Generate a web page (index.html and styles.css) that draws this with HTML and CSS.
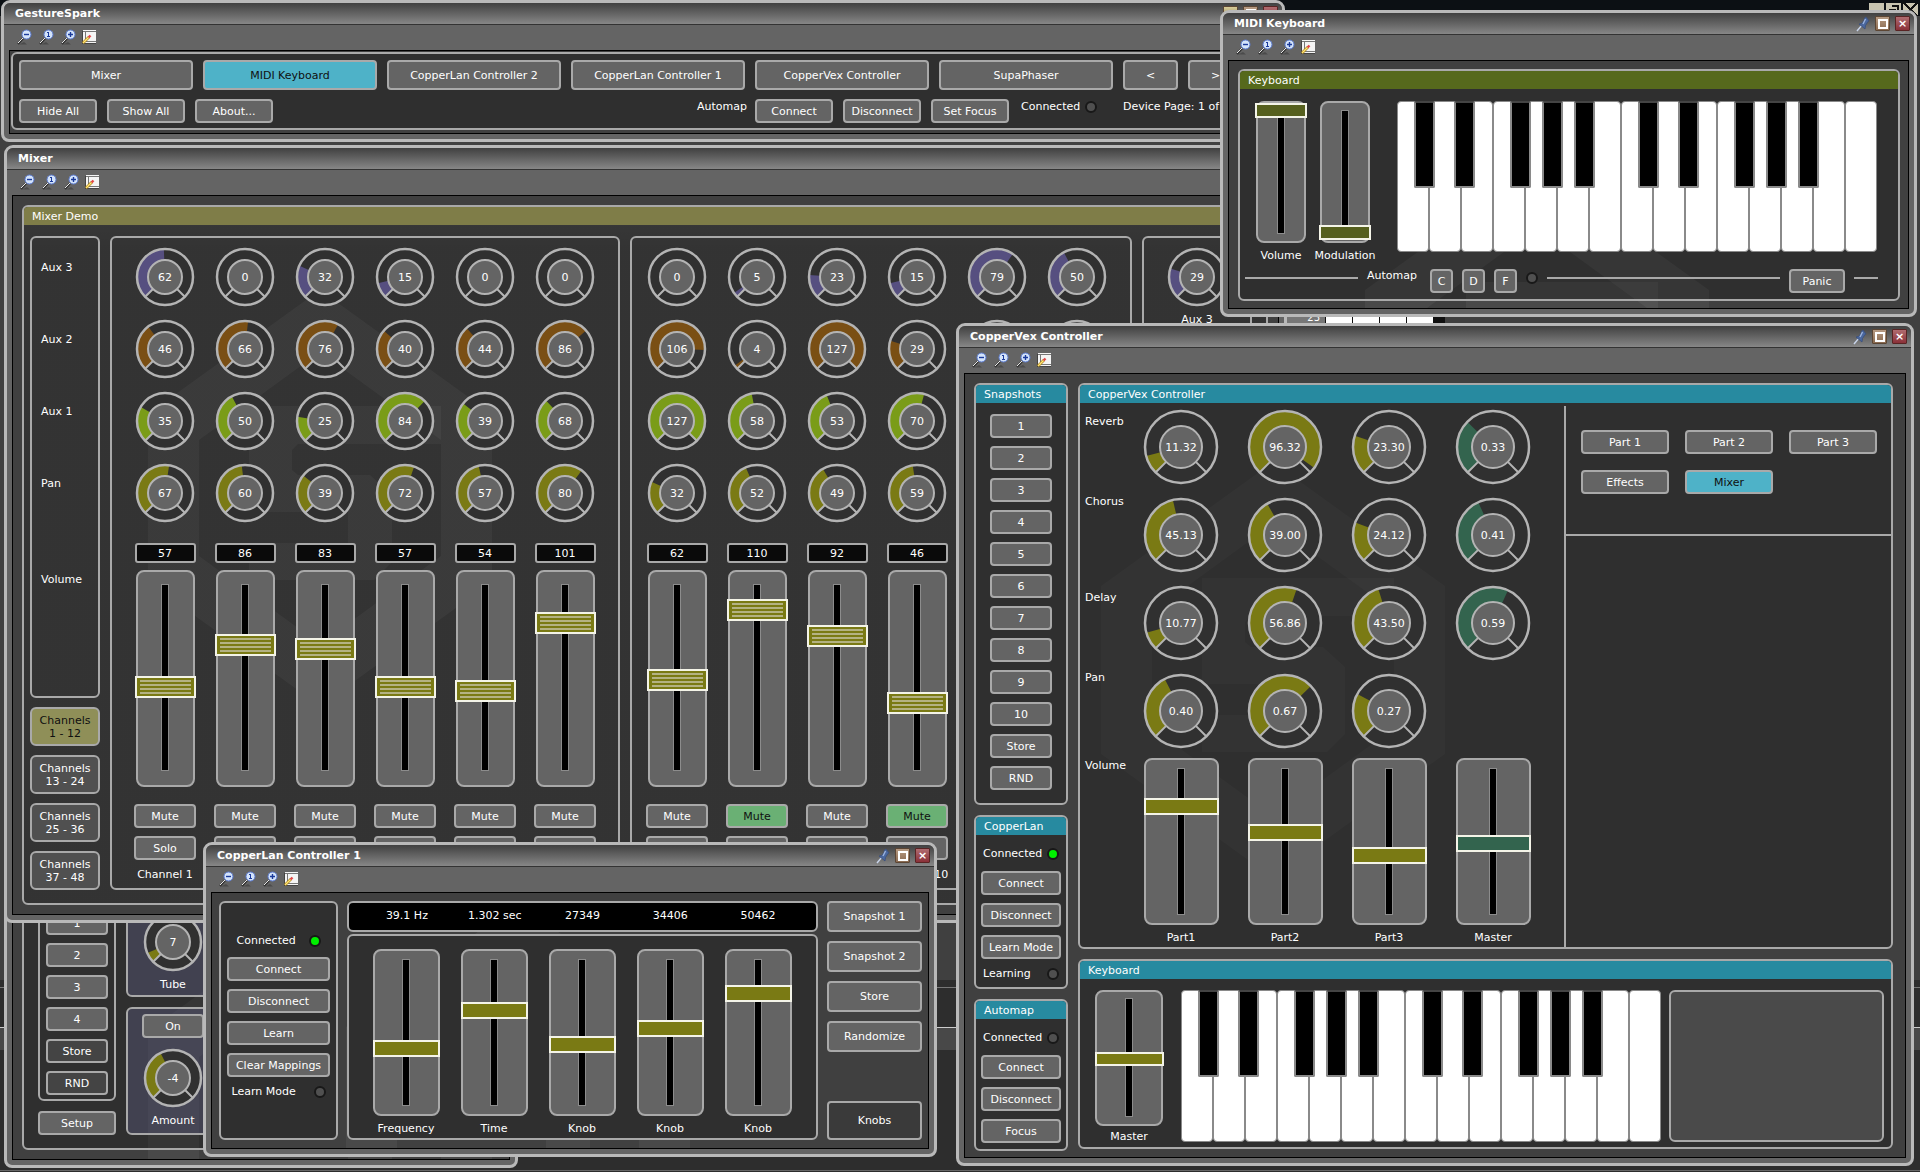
FILE: index.html
```html
<!DOCTYPE html>
<html lang="en">
<head>
<meta charset="utf-8">
<title>GestureSpark</title>
<link rel="stylesheet" href="styles.css">
</head>
<body>
<svg class="defs" aria-hidden="true">
  <symbol id="mark" viewBox="0 0 344 416">
    <path fill-rule="evenodd" d="M172 0L344 124V292L172 416L0 292V124ZM172 62L51 150V266L172 354L293 266V150Z"/>
    <path d="M101 116H293V154H150L144 160V180L150 185H222L244 205V272L226 290H101V253H200V222H101Z"/>
  </symbol>
  <symbol id="lens" viewBox="0 0 15 16">
    <path d="M2 15.500H10L7 13Z" fill="#000" opacity=".25"/>
    <path d="M1 15L6 9.500" stroke="#333" stroke-width="2"/>
    <path d="M1 14L6 9" stroke="#e8e8e8" stroke-width="1"/>
    <circle cx="9.500" cy="5.500" r="4.500" fill="#d3e3fa" stroke="#5b7bd0" stroke-width="1"/>
  </symbol>
  <symbol id="zoom-out" viewBox="0 0 15 16"><use href="#lens"/><path d="M7 5.500H12" stroke="#1a3a9c" stroke-width="1.400"/></symbol>
  <symbol id="zoom-one" viewBox="0 0 15 16"><use href="#lens"/><path d="M9.500 3V8M8 3.500H9.500M8 7.500H11" stroke="#1a3a9c" stroke-width="1" fill="none"/></symbol>
  <symbol id="zoom-in" viewBox="0 0 15 16"><use href="#lens"/><path d="M7 5.500H12M9.500 3V8" stroke="#1a3a9c" stroke-width="1.400"/></symbol>
  <symbol id="edit" viewBox="0 0 15 16">
    <path d="M0 2H14V15H0Z" fill="#444"/><path d="M1 1H14V14H1Z" fill="#f4f4f4"/>
    <path d="M1 2.500H14M3.500 3V12M3 12.500H14" stroke="#777" stroke-width="1"/>
    <path d="M1 14L7 8" stroke="#a87c10" stroke-width="2.600"/><path d="M1 14L7 8" stroke="#ffe678" stroke-width="1.400"/>
    <path d="M6.500 8.500L8.500 6.500" stroke="#e04848" stroke-width="2.400"/>
  </symbol>
  <symbol id="pin" viewBox="0 0 14 16">
    <path d="M1 15L6 9" stroke="#c8d4ea" stroke-width="1.400"/>
    <path d="M3 8L9 13L9.500 9.500L12 5.500L13 5L10 1L8.500 2L8 4.500L5.500 7.500Z" fill="#4a679e" stroke="#3a4f7c" stroke-width=".8"/>
    <path d="M9.500 3L7 8" stroke="#9db4dd" stroke-width="1.400"/>
  </symbol>
</svg>

<div class="desk">
  <div class="host-buttons" aria-hidden="true"><i></i><i class="restore"></i><i class="shut"></i></div>
  <div class="host-keys" aria-hidden="true"><b>23</b><i></i><i></i><i></i><i></i></div>

  <section class="window supa" data-title="SupaPhaser">
    <div class="client">
      <svg class="mark"><use href="#mark"/></svg>
      <div class="panel">
        <h2 class="bar violet">SupaPhaser</h2>
        <div class="supa-body">
          <div class="supa-side">
            <div class="box stack">
              <button>1</button><button>2</button><button>3</button><button>4</button>
              <button class="dark">Store</button><button class="dark">RND</button>
            </div>
            <button>Setup</button>
          </div>
          <div class="supa-main">
            <div class="box tinted"><div class="knob" data-value="7" data-turn="0.08" data-ink="#7a7a14"></div><span>Tube</span></div>
            <div class="box tinted"><button>On</button><div class="knob gap-top" data-value="-4" data-turn="0.4" data-ink="#7a7a14"></div><span>Amount</span></div>
          </div>
        </div>
      </div>
    </div>
  </section>

  <section class="window mixer" data-title="Mixer">
    <div class="client">
      <svg class="mark"><use href="#mark"/></svg>
      <div class="panel">
        <h2 class="bar khaki">Mixer Demo</h2>
        <div class="mixer-body">
          <div class="mixer-side">
            <ul class="box rows"><li>Aux 3</li><li>Aux 2</li><li>Aux 1</li><li>Pan</li><li>Volume</li></ul>
            <button class="bank picked">Channels<br>1 - 12</button>
            <button class="bank">Channels<br>13 - 24</button>
            <button class="bank">Channels<br>25 - 36</button>
            <button class="bank">Channels<br>37 - 48</button>
          </div>
          <div class="box strips" id="strips-a"></div>
          <div class="box strips second" id="strips-b"></div>
          <div class="box strips masters"><div class="strip"><div class="knob" data-value="29" data-turn="0.23" data-ink="#564f80"></div><span>Aux 3</span></div></div>
        </div>
      </div>
    </div>
  </section>

  <section class="window spark" data-title="GestureSpark" data-min="yes">
    <div class="client">
      <div class="box spark-body">
        <nav class="spark-row">
          <button>Mixer</button><button class="on">MIDI Keyboard</button><button>CopperLan Controller 2</button><button>CopperLan Controller 1</button><button>CopperVex Controller</button><button>SupaPhaser</button><button class="page">&lt;</button><button class="page">&gt;</button>
        </nav>
        <div class="spark-row tools">
          <button>Hide All</button><button>Show All</button><button>About...</button>
          <span class="automap">Automap</span>
          <button>Connect</button><button>Disconnect</button><button>Set Focus</button>
          <span class="status">Connected <i class="led"></i></span>
          <span class="pages">Device Page: 1 of 1</span>
        </div>
      </div>
    </div>
  </section>

  <section class="window midi" data-title="MIDI Keyboard" data-pin="yes">
    <div class="client">
      <svg class="mark"><use href="#mark"/></svg>
      <div class="panel">
        <h2 class="bar green">Keyboard</h2>
        <div class="midi-body">
          <label class="slot"><span class="fader"><input type="range" value="100"></span>Volume</label>
          <label class="slot"><span class="fader"><input type="range" value="0"></span>Modulation</label>
          <div class="keys"></div>
        </div>
        <div class="midi-foot">
          <hr class="r1"><span>Automap</span>
          <button>C</button><button>D</button><button>F</button>
          <i class="led"></i><hr class="r2"><button class="panic">Panic</button><hr class="r3">
        </div>
      </div>
    </div>
  </section>

  <section class="window lan" data-title="CopperLan Controller 1" data-pin="yes">
    <div class="client">
      <svg class="mark"><use href="#mark"/></svg>
      <div class="box lan-side">
        <span class="status">Connected <i class="led lit"></i></span>
        <button>Connect</button><button>Disconnect</button><button>Learn</button><button>Clear Mappings</button>
        <span class="status wide">Learn Mode <i class="led"></i></span>
      </div>
      <div class="lan-main">
        <div class="box readout"><output>39.1 Hz</output><output>1.302 sec</output><output>27349</output><output>34406</output><output>50462</output></div>
        <div class="box lan-faders">
          <label class="slot"><span class="fader"><input type="range" max="1000" value="385"></span>Frequency</label>
          <label class="slot"><span class="fader"><input type="range" max="1000" value="649"></span>Time</label>
          <label class="slot"><span class="fader"><input type="range" max="1000" value="417"></span>Knob</label>
          <label class="slot"><span class="fader"><input type="range" max="1000" value="524"></span>Knob</label>
          <label class="slot"><span class="fader"><input type="range" max="1000" value="767"></span>Knob</label>
        </div>
      </div>
      <div class="lan-right">
        <button>Snapshot 1</button><button>Snapshot 2</button><button>Store</button><button>Randomize</button><button class="knobs">Knobs</button>
      </div>
    </div>
  </section>

  <section class="window vex" data-title="CopperVex Controller" data-pin="yes">
    <div class="client">
      <svg class="mark"><use href="#mark"/></svg>
      <div class="vex-side">
        <div class="panel">
          <h2 class="bar teal">Snapshots</h2>
          <div class="stack snaps"><button>1</button><button>2</button><button>3</button><button>4</button><button>5</button><button>6</button><button>7</button><button>8</button><button>9</button><button>10</button><button>Store</button><button>RND</button></div>
        </div>
        <div class="panel">
          <h2 class="bar teal">CopperLan</h2>
          <div class="stack links">
            <span class="status">Connected <i class="led lit"></i></span>
            <button>Connect</button><button>Disconnect</button><button>Learn Mode</button>
            <span class="status last">Learning <i class="led"></i></span>
          </div>
        </div>
        <div class="panel">
          <h2 class="bar teal">Automap</h2>
          <div class="stack links">
            <span class="status">Connected <i class="led"></i></span>
            <button>Connect</button><button>Disconnect</button><button>Focus</button>
          </div>
        </div>
      </div>
      <div class="vex-main">
        <div class="panel">
          <h2 class="bar teal">CopperVex Controller</h2>
          <div class="vex-body">
            <div class="vex-grid">
              <span class="low">Reverb</span>
              <div class="knob big" data-value="11.32" data-turn="0.113" data-ink="#7a7a14"></div><div class="knob big" data-value="96.32" data-turn="0.963" data-ink="#7a7a14"></div><div class="knob big" data-value="23.30" data-turn="0.233" data-ink="#7a7a14"></div><div class="knob big" data-value="0.33" data-turn="0.33" data-ink="#33644e"></div>
              <span>Chorus</span>
              <div class="knob big" data-value="45.13" data-turn="0.451" data-ink="#7a7a14"></div><div class="knob big" data-value="39.00" data-turn="0.39" data-ink="#7a7a14"></div><div class="knob big" data-value="24.12" data-turn="0.241" data-ink="#7a7a14"></div><div class="knob big" data-value="0.41" data-turn="0.41" data-ink="#33644e"></div>
              <span class="low">Delay</span>
              <div class="knob big" data-value="10.77" data-turn="0.108" data-ink="#7a7a14"></div><div class="knob big" data-value="56.86" data-turn="0.569" data-ink="#7a7a14"></div><div class="knob big" data-value="43.50" data-turn="0.435" data-ink="#7a7a14"></div><div class="knob big" data-value="0.59" data-turn="0.59" data-ink="#33644e"></div>
              <span>Pan</span>
              <div class="knob big" data-value="0.40" data-turn="0.4" data-ink="#7a7a14"></div><div class="knob big" data-value="0.67" data-turn="0.67" data-ink="#7a7a14"></div><div class="knob big" data-value="0.27" data-turn="0.27" data-ink="#7a7a14"></div><i></i>
              <span>Volume</span>
              <label class="slot"><span class="fader"><input type="range" max="1000" value="738"></span>Part1</label>
              <label class="slot"><span class="fader"><input type="range" max="1000" value="562"></span>Part2</label>
              <label class="slot"><span class="fader"><input type="range" max="1000" value="397"></span>Part3</label>
              <label class="slot"><span class="fader pine"><input type="range" max="1000" value="486"></span>Master</label>
            </div>
            <div class="vex-parts">
              <div class="part-grid"><button>Part 1</button><button>Part 2</button><button>Part 3</button><button>Effects</button><button class="on">Mixer</button></div>
            </div>
          </div>
        </div>
        <div class="panel">
          <h2 class="bar teal">Keyboard</h2>
          <div class="vex-keys">
            <label class="slot"><span class="fader"><input type="range" max="1000" value="487"></span>Master</label>
            <div class="keys"></div>
            <div class="box blank"></div>
          </div>
        </div>
      </div>
    </div>
  </section>
</div>
<script src="app.js"></script>
</body>
</html>
```
FILE: styles.css
```css
* { box-sizing: border-box; }

body {
  margin: 0;
  background: #2d2d2d;
  color: #fff;
  font: 11px/14px "DejaVu Sans", Verdana, sans-serif;
}

.defs { position: absolute; width: 0; height: 0; }

.desk {
  position: relative;
  min-height: 100vh;
  overflow: hidden;
  background:
    linear-gradient(#0c1014, #0c1014) 0 0 / 100% 16px no-repeat,
    linear-gradient(#777, #777) 0 987px / 100% 1px no-repeat,
    linear-gradient(#ccc, #ccc) 0 1027px / 100% 1px no-repeat,
    linear-gradient(#484848, #484848) 0 1028px / 100% 22px no-repeat,
    linear-gradient(#666, #666) 0 1170px / 100% 1px no-repeat,
    linear-gradient(#404040, #404040) 0 0 / 100% 980px no-repeat,
    #2d2d2d;
}

.host-buttons { position: absolute; top: 3px; right: 2px; display: flex; gap: 2px; }
.host-buttons i { width: 15px; height: 13px; background: #c8c4b0; }
.host-buttons .restore { background: linear-gradient(#111, #111) 6px 2px / 7px 2px no-repeat, linear-gradient(#111, #111) 3px 6px / 7px 2px no-repeat, linear-gradient(#111, #111) 11px 2px / 2px 7px no-repeat, #c8c4b0; }
.host-buttons .shut { background: linear-gradient(45deg, transparent 45%, #111 45% 55%, transparent 55%), linear-gradient(-45deg, transparent 45%, #111 45% 55%, transparent 55%), #c8c4b0; }
.host-keys { position: absolute; top: 310px; left: 1286px; display: flex; gap: 1px; height: 20px; padding-right: 12px; background: #111; }
.host-keys b { width: 39px; padding: 0 5px; background: #777; text-align: right; font-size: 10px; font-weight: 400; line-height: 16px; }
.host-keys i { width: 26px; background: #fff; }

/* window frame */
.window {
  position: absolute;
  display: flex;
  flex-direction: column;
  padding: 0 5px 5px;
  border: 3px solid #b9b9b9;
  border-radius: 9px 9px 8px 8px;
  background: #646464;
}
.titlebar {
  display: flex;
  align-items: center;
  gap: 5px;
  height: 22px;
  margin: 0 -5px;
  padding: 0 4px 0 11px;
  border-bottom: 1px solid #333;
  border-radius: 6px 6px 0 0;
  background: linear-gradient(#404040, #878787);
}
.titlebar h1 { flex: 1; margin: 0; padding-top: 1px; font-size: 11px; line-height: 14px; white-space: nowrap; }
.titlebar button {
  width: 15px;
  height: 15px;
  padding: 0;
  border: 1px solid #5c4634;
  border-radius: 1px;
  background: linear-gradient(#b89c84, #8a6a50);
}
.titlebar .max::before { content: ""; width: 6px; height: 6px; border: 2px solid #fff; }
.titlebar .min { background: linear-gradient(#d8cc98, #8a7c50); }
.titlebar .close { border-color: #5a2424; background: linear-gradient(#b06c70, #8a3038); font-size: 11px; font-weight: 700; line-height: 11px; }
.titlebar .pin { border: 0; background: none; }
.titlebar svg { width: 14px; height: 16px; }
.toolbar { display: flex; gap: 7px; height: 25px; padding: 4px 8px 0; }
.toolbar button { width: 15px; height: 16px; padding: 0; border: 0; background: none; }
.toolbar button:last-child { margin-left: -1px; }
.toolbar svg { width: 15px; height: 16px; }
.client { position: relative; flex: 1; overflow: hidden; border: 1px solid #000; background: #404040; }
.client > * { position: relative; }
.client > .mark { position: absolute; width: 344px; height: 416px; fill: rgba(255, 255, 255, .05); }

.panel, .box { border: 2px solid #a9a9a9; border-radius: 6px; }
.panel { background: rgba(0, 0, 0, .26); }
.bar { height: 18px; margin: 0; padding: 3px 8px 0; border-radius: 4px 4px 0 0; font-size: 11px; font-weight: 400; line-height: 14px; }
.khaki { background: #7f7d48; }
.green { background: #56691c; }
.teal { background: #278aa0; }
.violet { background: #564f80; }

button {
  display: flex;
  align-items: center;
  justify-content: center;
  height: 24px;
  padding: 1px 0 0;
  border: 2px solid #a9a9a9;
  border-radius: 4px;
  background: #646464;
  color: #fff;
  font: inherit;
  white-space: nowrap;
}
button.on { background: #4eb2c8; color: #101010; }
button.dark { background: #444; }
.led { flex: none; width: 12px; height: 12px; border: 2px solid #181818; border-radius: 50%; background: #505050; }
.led.lit { background: #00f000; }
.status { display: flex; justify-content: space-between; align-items: center; height: 14px; }
.stack { display: flex; flex-direction: column; align-items: center; gap: 8px; }
.stack button { width: 62px; }
hr { height: 2px; margin: 8px 0 0; border: 0; background: #a9a9a9; }

/* rotary controls */
.knob { display: grid; place-items: center; width: 60px; height: 60px; }
.knob svg, .knob span { grid-area: 1 / 1; }
.knob span { padding-top: 1px; }
.knob svg { width: 60px; height: 60px; }
.knob.big, .knob.big svg { width: 76px; height: 76px; }

/* vertical faders: --thumb is the handle height, --run the travel */
.slot { display: flex; flex-direction: column; align-items: center; gap: 6px; white-space: nowrap; }
.fader {
  --thumb: 17px;
  --run: 145px;
  --ink: #7a7a14;
  display: flex;
  align-items: flex-start;
  justify-content: center;
  flex: none;
  width: 75px;
  height: 167px;
  border: 2px solid #a9a9a9;
  border-radius: 8px;
  background: #646464;
}
.fader.pine { --ink: #33644e; }
.fader input {
  flex: none;
  writing-mode: vertical-lr;
  direction: rtl;
  appearance: none;
  width: calc(100% + 4px);
  height: calc(var(--run) + var(--thumb));
  margin: 0 -2px;
  background:
    linear-gradient(#000, #000) center / 6px var(--run) no-repeat,
    linear-gradient(#8c8c8c, #8c8c8c) center / 8px calc(var(--run) + 2px) no-repeat;
}
.fader input::-webkit-slider-thumb {
  appearance: none;
  width: var(--wide, 75px);
  height: var(--thumb);
  border: 2px solid #f4f4e8;
  background: var(--ink);
}

/* piano */
.keys { position: relative; display: flex; width: 480px; height: 152px; }
.keys button { flex: 1; height: auto; border: 1px solid #8a8a8a; border-radius: 4px; background: #fff; }
.keys .black {
  position: absolute;
  top: 0;
  width: 21px;
  height: 87px;
  border: 2px solid #8a8a8a;
  border-top-color: #444;
  border-radius: 2px;
  background: #000;
}

/* GestureSpark */
.spark { top: 0; left: 1px; width: 1284px; }
.spark .client { padding: 1px 1px 3px; }
.spark-body { display: flex; flex-direction: column; gap: 9px; padding: 6px 6px 5px; background: #2f2f2f; }
.spark-row { display: flex; align-items: flex-start; gap: 10px; }
.spark-row button { flex: none; width: 174px; height: 30px; }
.spark-row .page { width: 55px; }
.tools button { width: 78px; height: 24px; }
.tools span { padding-top: 1px; }
.automap { width: 48px; margin-left: 414px; }
.tools .status { width: 76px; height: 14px; margin-left: 2px; }
.tools .status, .pages { flex: none; }
.pages { margin-left: 16px; }

/* Mixer */
.mixer { top: 145px; left: 4px; }
.mixer .client { padding: 9px 10px 9px 9px; }
.mixer .mark { top: 94px; left: 135px; }
.mixer .panel { background: linear-gradient(rgba(0, 0, 0, .1), rgba(0, 0, 0, .2) 40px); }
.mixer-body { display: flex; gap: 10px; padding: 11px 14px 13px 6px; }
.mixer-side { display: flex; flex-direction: column; gap: 9px; width: 70px; }
.rows { display: flex; flex-direction: column; flex: 1; gap: 58px; margin: 0; padding: 23px 9px 0; list-style: none; }
.rows li:last-child { margin-top: 24px; }
.bank { height: 39px; line-height: 13px; border-radius: 6px; background: #505050; }
.bank.picked { background: #8f8f58; color: #101010; }
.strips { display: flex; width: 510px; padding: 9px 13px 6px; }
.strips.second { width: 502px; padding-left: 5px; }
.strips.masters { width: 110px; }
.strip { display: flex; flex: none; flex-direction: column; align-items: center; width: 80px; white-space: nowrap; }
.strip .knob { margin-bottom: 12px; }
.masters .strip .knob { margin-bottom: 6px; }
.strip output { width: 61px; height: 20px; margin: 8px 0 7px; border: 2px solid #a9a9a9; border-radius: 3px; background: #0a0a0a; line-height: 17px; text-align: center; }
.strip .fader { --thumb: 22px; --run: 185px; --wide: 61px; width: 59px; height: 217px; margin-bottom: 17px; padding-top: 2px; }
.strip .fader input { width: 61px; }
.strip .fader input::-webkit-slider-thumb {
  background: repeating-linear-gradient(#7a7a14 0 2px, #b4b283 2px 4px) center / calc(100% - 6px) 100% no-repeat, #7a7a14;
}
.strip button { width: 62px; margin-bottom: 8px; }
.strip .muted { background: #6ab074; color: #101010; }

/* MIDI Keyboard */
.midi { top: 10px; left: 1220px; width: 697px; }
.midi .client { padding: 8px 8px 7px 9px; }
.midi .mark { top: 105px; left: 136px; }
.midi-body { display: flex; padding: 12px 0 6px 9px; }
.midi .slot { width: 64px; }
.midi .fader { --thumb: 15px; --run: 122px; --wide: 52px; --ink: #56601e; width: 50px; height: 142px; }
.midi .fader input { width: 52px; }
.midi .keys { height: 151px; margin-left: 20px; }
.midi-foot { display: flex; align-items: flex-start; gap: 9px; padding: 0 5px 6px; }
.midi-foot button { width: 23px; }
.midi-foot span { width: 54px; }
.midi-foot .panic { width: 56px; }
.midi-foot .led { margin-top: 3px; }
.r1 { width: 113px; }
.r2 { width: 233px; }
.r3 { width: 24px; }

/* CopperLan Controller 1 */
.lan { top: 842px; left: 203px; }
.lan .client { display: flex; padding: 8px 6px 8px 7px; }
.lan .mark { top: 10px; left: 134px; }
.lan .box { background: #2f2f2f; }
.lan-side { display: flex; flex-direction: column; align-items: center; gap: 8px; width: 119px; padding-top: 31px; }
.lan-side .status { width: 84px; margin-bottom: 1px; }
.lan-side .status.wide { width: 94px; }
.lan-side button { width: 103px; }
.lan-main { display: flex; flex-direction: column; gap: 2px; margin: 0 9px; }
.lan .readout { display: flex; width: 471px; height: 31px; padding: 6px 14px; background: #000; }
.readout output { width: 88px; text-align: center; }
.lan-faders { display: flex; padding: 13px 13px 2px; }
.lan-faders .slot { width: 88px; }
.lan-faders .fader { --wide: 67px; width: 67px; }
.lan-faders .fader input { width: 67px; }
.lan-right { display: flex; flex-direction: column; gap: 9px; width: 95px; }
.lan-right button { height: 31px; }
.lan-right .knobs { height: 39px; margin-top: auto; background: #3a3a3a; }

/* CopperVex Controller */
.vex { top: 323px; left: 956px; }
.vex .client { display: flex; gap: 10px; padding: 9px 12px 6px 9px; }
.vex .mark { top: 88px; left: 136px; fill: rgba(255, 255, 255, .03); }
.vex-side { display: flex; flex-direction: column; gap: 10px; width: 94px; }
.snaps { padding: 11px 0 13px; }
.links { padding: 12px 0 6px; }
.links button { width: 80px; }
.links .status { width: 76px; margin-bottom: 2px; }
.links .status.last { margin-bottom: 0; }
.vex-main { display: flex; flex-direction: column; gap: 10px; width: 815px; }
.vex-body { display: flex; height: 544px; }
.vex-grid { display: grid; grid-template-columns: 49px repeat(4, 104px); grid-template-rows: repeat(4, 88px) 1fr; width: 484px; justify-items: center; }
.vex-grid > span { justify-self: start; padding: 4px 0 0 5px; }
.vex-grid > .low { padding-top: 12px; }
.vex-grid .knob { align-self: center; }
.vex-grid .slot { padding-top: 3px; }
.vex-parts { flex: 1; margin-top: 3px; border-left: 2px solid #a9a9a9; }
.part-grid { display: grid; grid-template-columns: repeat(3, 88px); gap: 16px; align-content: start; height: 130px; padding: 24px 14px 0 15px; border-bottom: 2px solid #a9a9a9; }
.vex-keys { display: flex; padding: 11px 7px 3px 15px; }
.vex-keys .slot { gap: 4px; }
.vex-keys .fader { --thumb: 14px; --run: 117px; --wide: 69px; width: 68px; height: 136px; }
.vex-keys .fader input { width: 69px; }
.vex-keys .keys { margin: 0 8px 0 18px; }
.blank { flex: 1; height: 152px; background: #4a4a4a; }

/* SupaPhaser */
.supa { top: 813px; left: 4px; width: 514px; }
.supa .client { padding: 9px; }
.supa .mark { top: 43px; left: 135px; }
.supa-body { display: flex; gap: 10px; padding: 11px 14px 13px; }
.supa-side { display: flex; flex-direction: column; gap: 10px; width: 78px; }
.supa-side .box { padding: 5px 0 4px; }
.supa-main { display: flex; flex-direction: column; gap: 10px; width: 94px; text-align: center; }
.tinted { display: flex; flex-direction: column; align-items: center; gap: 6px; padding: 5px 0; background: rgba(110, 110, 160, .3); }
.tinted:first-child { padding: 6px 0 3px; }
.tinted button { width: 62px; }
.gap-top { margin-top: 4px; }
```
FILE: app.js
```js
const icon = (id) => `<svg aria-hidden="true"><use href="#${id}"/></svg>`;

// Title bar and zoom toolbar shared by every window
document.querySelectorAll('.window').forEach((win) => {
  const first = win.dataset.min
    ? '<button class="min" aria-label="Minimize"></button>'
    : `<button class="pin" aria-label="Pin">${icon('pin')}</button>`;
  win.insertAdjacentHTML('afterbegin', `
    <header class="titlebar"><h1>${win.dataset.title}</h1>${first}
      <button class="max" aria-label="Maximize"></button>
      <button class="close" aria-label="Close">×</button></header>
    <div class="toolbar">
      <button aria-label="Zoom out">${icon('zoom-out')}</button>
      <button aria-label="Actual size">${icon('zoom-one')}</button>
      <button aria-label="Zoom in">${icon('zoom-in')}</button>
      <button aria-label="Edit">${icon('edit')}</button></div>`);
});

// Mixer channel strips
const rows = [['aux3', '#564f80'], ['aux2', '#7a4f14'], ['aux1', '#7a9c18'], ['pan', '#7a7a14']];
function strips(id, start, data) {
  document.getElementById(id).innerHTML = data.map((c, n) => {
    const knobs = rows.map(([key, ink], r) => {
      const value = c[r];
      const turn = c.turn && c.turn[r] ? c.turn[r] : value / 127;
      return `<div class="knob" data-value="${value}" data-turn="${turn}" data-ink="${ink}"></div>`;
    }).join('');
    const name = `Channel ${start + n}`;
    return `<div class="strip">${knobs}<output>${c[4]}</output>
      <span class="fader"><input type="range" max="127" value="${c[4]}" aria-label="${name} volume"></span>
      <button class="${c[5] ? 'muted' : ''}">Mute</button><button>Solo</button><span>${name}</span></div>`;
  }).join('');
}
const last = [0, 86, 68, 80, 101];
last.turn = [0, 0, 0.34];
strips('strips-a', 1, [
  [62, 46, 35, 67, 57], [0, 66, 50, 60, 86], [32, 76, 25, 39, 83],
  [15, 40, 84, 72, 57], [0, 44, 39, 57, 54], last,
]);
strips('strips-b', 7, [
  [0, 106, 127, 32, 62], [5, 4, 58, 52, 110, true], [23, 127, 53, 49, 92],
  [15, 29, 70, 59, 46, true], [79, 0, 0, 64, 64], [50, 0, 0, 64, 64],
]);

// Rotary controls: 270 degree sweep starting at the lower left
document.querySelectorAll('.knob').forEach((el) => {
  const big = el.classList.contains('big');
  const size = big ? 76 : 60;
  const c = size / 2;
  const outer = c - 2;
  const inner = big ? 21 : 17;
  const mid = (outer + inner) / 2;
  const len = 2 * Math.PI * mid * 0.75 * Number(el.dataset.turn);
  const a = inner * Math.SQRT1_2;
  const b = outer * Math.SQRT1_2;
  el.innerHTML = `<svg viewBox="0 0 ${size} ${size}" aria-hidden="true">
    <circle cx="${c}" cy="${c}" r="${outer}" fill="#303030"/>
    <circle cx="${c}" cy="${c}" r="${mid}" fill="none" stroke="${el.dataset.ink}" stroke-width="${outer - inner}"
      stroke-dasharray="${len} 999" transform="rotate(135 ${c} ${c})"/>
    <path d="M${c - a} ${c + a}L${c - b} ${c + b}M${c + a} ${c + a}L${c + b} ${c + b}" stroke="#b4b4b4" stroke-width="2"/>
    <circle cx="${c}" cy="${c}" r="${outer}" fill="none" stroke="#b4b4b4" stroke-width="2.5"/>
    <circle cx="${c}" cy="${c}" r="${inner}" fill="#646464" stroke="#b4b4b4" stroke-width="2"/></svg>
    <span>${el.dataset.value}</span>`;
});

// Two octaves plus the closing C
const offsets = [17, 57, 113, 145, 177, 241, 281, 337, 369, 401];
document.querySelectorAll('.keys').forEach((el) => {
  let html = '';
  for (let i = 0; i < 15; i += 1) html += `<button aria-label="White key ${i + 1}"></button>`;
  offsets.forEach((x, i) => { html += `<button class="black" style="left:${x}px" aria-label="Black key ${i + 1}"></button>`; });
  el.innerHTML = html;
});
```
